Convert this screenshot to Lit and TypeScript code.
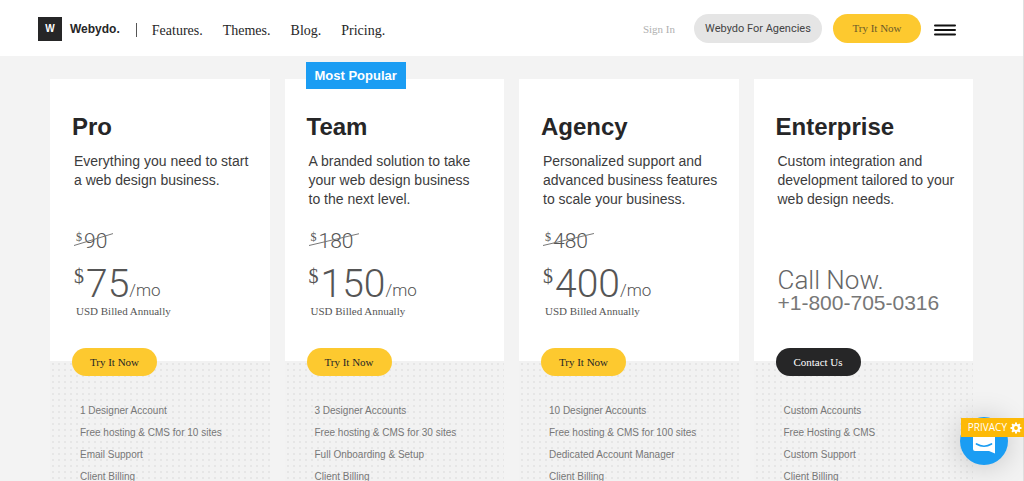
import { LitElement, html, css, nothing } from "lit";
import { customElement, property } from "lit/decorators.js";

interface Plan {
  name: string;
  lines: string[];
  oldPrice?: string;
  price?: string;
  action: string;
  dark?: boolean;
  popular?: boolean;
  features: string[];
}

const PLANS: Plan[] = [
  {
    name: "Pro",
    lines: ["Everything you need to start", "a web design business."],
    oldPrice: "90",
    price: "75",
    action: "Try It Now",
    features: ["1 Designer Account", "Free hosting & CMS for 10 sites", "Email Support", "Client Billing"],
  },
  {
    name: "Team",
    lines: ["A branded solution to take", "your web design business", "to the next level."],
    oldPrice: "180",
    price: "150",
    action: "Try It Now",
    popular: true,
    features: ["3 Designer Accounts", "Free hosting & CMS for 30 sites", "Full Onboarding & Setup", "Client Billing"],
  },
  {
    name: "Agency",
    lines: ["Personalized support and", "advanced business features", "to scale your business."],
    oldPrice: "480",
    price: "400",
    action: "Try It Now",
    features: ["10 Designer Accounts", "Free hosting & CMS for 100 sites", "Dedicated Account Manager", "Client Billing"],
  },
  {
    name: "Enterprise",
    lines: ["Custom integration and", "development tailored to your", "web design needs."],
    action: "Contact Us",
    dark: true,
    features: ["Custom Accounts", "Free Hosting & CMS", "Custom Support", "Client Billing"],
  },
];

@customElement("plan-card")
export class PlanCard extends LitElement {
  @property({ attribute: false }) plan!: Plan;

  static styles = css`
    :host {
      display: flex;
      flex-direction: column;
      position: relative;
      font-family: "Liberation Sans", Arial, sans-serif;
      color: #262627;
    }
    .tag {
      position: absolute;
      top: -17px;
      left: 21px;
      padding: 0 9px;
      background: #1b9df3;
      color: #fff;
      font-size: 13px;
      font-weight: 700;
      line-height: 27px;
    }
    .top {
      display: flex;
      flex-direction: column;
      min-height: 282px;
      padding: 33px 0 0 22px;
      box-sizing: border-box;
      background: #fff;
    }
    h2 {
      margin: 0;
      font-size: 24px;
      line-height: 30px;
      font-weight: 700;
    }
    .desc {
      margin: 10px 0 0 2px;
      height: 77px;
      font-size: 14px;
      line-height: 19px;
      color: #3c3c3d;
      white-space: nowrap;
    }
    .desc span {
      display: block;
    }
    .old,
    .now {
      display: flex;
      align-items: flex-start;
      font-family: Roboto, "Liberation Sans", sans-serif;
      font-weight: 300;
      color: #555;
    }
    .old {
      position: relative;
      align-self: flex-start;
      margin-left: 4px;
      font-size: 21px;
      line-height: 24px;
      text-decoration: none;
    }
    .strike {
      position: absolute;
      left: -2px;
      top: 4px;
      width: calc(100% + 8px);
      height: 13px;
    }
    sup {
      font-family: "Liberation Serif", "Times New Roman", serif;
      font-weight: 400;
      vertical-align: baseline;
    }
    .old sup {
      font-size: 12px;
      line-height: 16px;
      margin-right: 2px;
    }
    .now {
      margin: 11px 0 0 2px;
      font-size: 39px;
      line-height: 40px;
    }
    .now sup {
      font-size: 20px;
      line-height: 24px;
      margin-right: 2px;
    }
    .per {
      font-size: 17px;
      line-height: 20px;
      align-self: flex-end;
      margin-bottom: 4px;
    }
    .note {
      margin: 0 0 0 4px;
      font: 11px/14px "Liberation Serif", "Times New Roman", serif;
      color: #555;
    }
    .call {
      margin: 39px 0 0 2px;
      font-family: Roboto, "Liberation Sans", sans-serif;
      font-weight: 300;
      font-size: 26px;
      line-height: 25px;
      color: #666;
    }
    .phone {
      align-self: flex-start;
      margin-left: 2px;
      font-size: 21px;
      line-height: 20px;
      color: #777;
      text-decoration: none;
    }
    .bottom {
      flex: 1;
      padding: 0 0 20px 22px;
      background: #f2f2f2 radial-gradient(circle at 3px 3px, #e6e6e6 1px, transparent 1px) 0 0 / 6px 6px;
    }
    .action {
      display: block;
      width: 85px;
      height: 28px;
      margin-top: -13px;
      padding: 0;
      border: 0;
      border-radius: 14px;
      background: #fdc92f;
      color: #262627;
      font: 11px/28px "Liberation Serif", "Times New Roman", serif;
      cursor: pointer;
    }
    .dark {
      background: #262627;
      color: #fff;
    }
    ul {
      list-style: none;
      margin: 24px 0 0 8px;
      padding: 0;
      font-size: 10px;
      line-height: 22px;
      color: #777;
    }
  `;

  private renderPrice(p: Plan) {
    if (!p.price)
      return html`<div class="call">Call Now.</div>
        <a class="phone" href="tel:+18007050316">+1-800-705-0316</a>`;
    return html`<s class="old"
        ><sup>$</sup>${p.oldPrice}<svg class="strike" viewBox="0 0 40 13" preserveAspectRatio="none" aria-hidden="true">
          <path d="M0 12.5L40 0.5" stroke="#777" stroke-width="1" fill="none" vector-effect="non-scaling-stroke" />
        </svg></s>
      <div class="now"><sup>$</sup>${p.price}<span class="per">/mo</span></div>
      <p class="note">USD Billed Annually</p>`;
  }

  render() {
    const p = this.plan;
    return html`
      ${p.popular ? html`<span class="tag">Most Popular</span>` : nothing}
      <div class="top">
        <h2>${p.name}</h2>
        <div class="desc">${p.lines.map((l) => html`<span>${l}</span>`)}</div>
        ${this.renderPrice(p)}
      </div>
      <div class="bottom">
        <button class="action ${p.dark ? "dark" : ""}">${p.action}</button>
        <ul>
          ${p.features.map((f) => html`<li>${f}</li>`)}
        </ul>
      </div>
    `;
  }
}

@customElement("app-root")
export class AppRoot extends LitElement {
  static styles = css`
    :host {
      display: block;
      box-sizing: border-box;
      height: 100vh;
      overflow: hidden;
      background: #f3f3f3;
      border-right: 1px solid #e0e0e0;
      font-family: "Liberation Sans", Arial, sans-serif;
      color: #262627;
    }
    header {
      display: flex;
      align-items: center;
      height: 56px;
      padding: 0 67px 0 38px;
      box-sizing: border-box;
      background: #fff;
    }
    a {
      color: inherit;
      text-decoration: none;
    }
    .brand {
      display: flex;
      align-items: center;
      gap: 8px;
      margin-top: 2px;
      font-size: 12px;
      font-weight: 700;
    }
    .mark {
      width: 24px;
      line-height: 24px;
      background: #262627;
      color: #fff;
      font-size: 10px;
      text-align: center;
    }
    nav {
      display: flex;
      gap: 20px;
      margin: 6px 0 0 16px;
      padding-left: 16px;
      background: linear-gradient(#555, #555) no-repeat 0 0 / 1px 14px;
      font: 14px/16px "Liberation Serif", "Times New Roman", serif;
    }
    .right {
      display: flex;
      align-items: center;
      margin-left: auto;
      font: 11px/16px "Liberation Serif", "Times New Roman", serif;
    }
    .signin {
      margin-top: 2px;
      color: #b0b0b0;
    }
    .pill {
      border: 0;
      border-radius: 15px;
      height: 29px;
      padding: 0;
      cursor: pointer;
    }
    .agencies {
      width: 128px;
      margin-left: 19px;
      background: #e5e5e5;
      color: #444;
      font: 11px/29px Roboto, "Liberation Sans", sans-serif;
    }
    .try {
      width: 88px;
      margin-left: 11px;
      background: #fdc92f;
      color: #6b5a2a;
      font: 11px/29px "Liberation Serif", "Times New Roman", serif;
    }
    .menu {
      display: flex;
      margin: 4px 0 0 13px;
      padding: 0;
      border: 0;
      background: none;
    }
    main {
      display: grid;
      grid-template-columns: repeat(4, minmax(0, 1fr));
      gap: 15px;
      padding: 23px 50px 0;
    }
    .chat {
      position: fixed;
      right: 16px;
      bottom: 16px;
      width: 48px;
      height: 48px;
      padding: 0;
      border: 0;
      border-radius: 50%;
      background: #1b9df3;
      box-shadow: 0 1px 30px rgba(0, 0, 0, 0.2);
    }
    .chat svg {
      display: block;
    }
    .privacy {
      position: fixed;
      right: 0;
      bottom: 44px;
      display: flex;
      align-items: center;
      gap: 3px;
      height: 19px;
      padding: 0 2px 0 7px;
      border: 0;
      background: #fdb907;
      color: #fff;
      font: 10px/19px "Open Sans", sans-serif;
    }
  `;

  render() {
    return html`
      <header>
        <a class="brand" href="#"><span class="mark">W</span>Webydo.</a>
        <nav>
          <a href="#">Features.</a><a href="#">Themes.</a><a href="#">Blog.</a><a href="#">Pricing.</a>
        </nav>
        <div class="right">
          <a class="signin" href="#">Sign In</a>
          <button class="pill agencies">Webydo For Agencies</button>
          <button class="pill try">Try It Now</button>
          <button class="menu" aria-label="Menu">
            <svg width="22" height="12" viewBox="0 0 22 12">
              <path d="M1 1.5H21M1 6H21M1 10.5H21" stroke="#111" stroke-width="2" stroke-linecap="round" />
            </svg>
          </button>
        </div>
      </header>
      <main>${PLANS.map((p) => html`<plan-card .plan=${p}></plan-card>`)}</main>
      <button class="chat" aria-label="Open chat">
        <svg width="48" height="48" viewBox="0 0 48 48">
          <path d="M15 14h18q2 0 2 2v20.5l-6-2.5H15q-2 0-2-2V16q0-2 2-2z" fill="#fff" />
          <path d="M16.5 27q7.500 4.500 15 0" fill="none" stroke="#1b9df3" stroke-width="1.700" stroke-linecap="round" />
        </svg>
      </button>
      <button class="privacy">
        PRIVACY
        <svg width="12" height="12" viewBox="0 0 12 12">
          <circle cx="6" cy="6" r="3" fill="none" stroke="#fff" stroke-width="2.200" />
          <path
            d="M6 .5V2.500M6 9.500V11.500M.5 6H2.500M9.500 6H11.500M2.100 2.100L3.500 3.500M8.500 8.500L9.900 9.900M9.900 2.100L8.500 3.500M3.500 8.500L2.100 9.900"
            stroke="#fff"
            stroke-width="2"
          />
        </svg>
      </button>
    `;
  }
}
